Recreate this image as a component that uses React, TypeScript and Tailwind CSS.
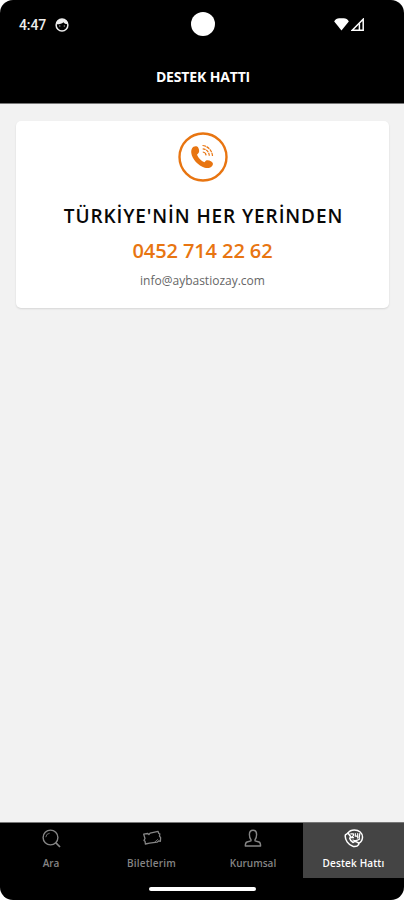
import { type ReactNode } from 'react';

type Tab = {
    label: string;
    icon: ReactNode;
    active?: boolean;
    labelClass: string;
};

function SearchIcon() {
    return (
        <svg className="h-5 w-5" viewBox="0 0 20 20" fill="none" stroke="currentColor" strokeWidth="1.4">
            <circle cx="9.5" cy="8.5" r="7.4" />
            <path d="M14.7 13.7 19 18" strokeWidth="1.7" />
            <path d="M4.8 8.2a4.4 4.4 0 0 1 3.9-4" strokeWidth="0.8" />
        </svg>
    );
}

function TicketIcon() {
    return (
        <svg className="h-5 w-5" viewBox="0 0 20 20" fill="none" stroke="currentColor" strokeWidth="1.3" strokeLinejoin="round">
            <path d="M1.7 5.2 5.8 4.5l1.1 1.1 1.2-1.4 8-1.8.7 2.1 1 .4-.3 2.2 1.1 1.6-.2 3.6-1.8-.4-1.6 1.3-7.4.9-4.2.9-.4-2.8-1-.8 1-1.9Z" />
            <path d="m12.5 13.3 3.6-3.2" strokeWidth="0.8" />
        </svg>
    );
}

function PersonIcon() {
    return (
        <svg className="h-5 w-5" viewBox="0 0 20 20" fill="none" stroke="currentColor" strokeWidth="1.4" strokeLinejoin="round">
            <path d="M8 10.7C6.6 9.2 6.4 7.9 6.4 5.5 6.4 3 7.6 1.2 10 1.2s3.6 1.8 3.6 4.3c0 2.4-.2 3.7-1.6 5.2v1.1l4 1.2c1.2.5 1.6 1.6 1.6 4H2.3c0-2.4.5-3.5 1.7-4l4-1.2Z" />
        </svg>
    );
}

function SupportIcon() {
    return (
        <svg className="h-5 w-5" viewBox="0 0 20 20" fill="none" stroke="currentColor" strokeWidth="1.5" strokeLinecap="round" strokeLinejoin="round">
            <path d="M4 4C5.3 2 7.5 1 10.3 1c4.8 0 8.2 3 8.2 7.1 0 2.6-1.2 4.8-3.4 6.1" />
            <path d="M4 4 1.4 5.8c-1 4.4 3 10.4 7.9 11.6 2.3.5 4.3-.3 5.4-1.8l-.4-2-3.4-1.4-1.8 1.3c-1.8-.8-2.9-2.3-3.4-4.2l1-1.6Z" />
            <path d="M6.8 4.9h2.6v1.7L7.1 8.7h2.4M11.3 4.7v2.5h2.4m0-2.7v4.6M15.8 4.6l-.6 4.6M8.9 11c2.2.9 5 .4 6.8-.9" strokeWidth="1.2" />
        </svg>
    );
}

const tabs: Tab[] = [
    { label: 'Ara', icon: <SearchIcon />, labelClass: 'pl-px' },
    { label: 'Biletlerim', icon: <TicketIcon />, labelClass: 'tracking-[0.2px]' },
    { label: 'Kurumsal', icon: <PersonIcon />, labelClass: 'pl-px' },
    { label: 'Destek Hattı', icon: <SupportIcon />, active: true, labelClass: 'tracking-[0.15px]' },
];

function StatusBar() {
    return (
        <div className="grid h-[49px] grid-cols-3 items-center px-[19px]">
            <div className="flex items-center gap-[9px] text-[#ededed]">
                <span className="font-[Roboto,sans-serif] text-[14px] leading-none font-medium tracking-[-0.1px]">4:47</span>
                <svg className="h-[14px] w-[14px]" viewBox="0 0 14 14" fill="none" stroke="currentColor">
                    <circle cx="7" cy="7" r="5.9" strokeWidth="1.5" />
                    <path d="M1.3 6.3C1.7 2.8 4 1 7 1s5.3 1.8 5.7 5.3C10.5 6.1 9.3 5.4 8.4 4.2 6.8 5.8 4.5 6.4 1.3 6.3Z" fill="currentColor" stroke="none" />
                    <path d="M4.3 8h1M8.8 8h1" strokeWidth="1" />
                </svg>
            </div>
            <div className="-mt-px ml-[2px] h-6 w-6 justify-self-center rounded-full bg-white" />
            <div className="mr-[21px] flex items-center gap-[2px] justify-self-end text-white">
                <svg className="h-[13px] w-[15px]" viewBox="0 0 15 13" fill="currentColor">
                    <path d="M.2 3.4C1.2 1.4 3.2.2 5.2.2h4.6c2 0 4 1.2 5 3.2L7.5 12.6Z" />
                </svg>
                <svg className="h-[13px] w-[13px]" viewBox="0 0 13 13" fill="none" stroke="currentColor" strokeWidth="1.5">
                    <path d="M1.2 12.2 12.2 1.2v11Z" />
                    <path d="M8.4 5.5v6.7" />
                </svg>
            </div>
        </div>
    );
}

export default function App() {
    return (
        <div className="h-[900px] w-[404px] bg-white font-['Open_Sans','Noto_Sans',sans-serif]">
            <div className="flex h-full flex-col overflow-hidden rounded-[13px] bg-black">
                <header className="h-[104px] shrink-0 border-b border-[#777]">
                    <StatusBar />
                    <h1 className="pt-[20px] pl-[2px] text-center text-[14px] leading-4 font-bold tracking-[-0.15px] text-white">DESTEK HATTI</h1>
                </header>

                <main className="flex-1 bg-[#f2f2f2] px-4 pt-[17px]">
                    <div className="flex h-[187px] w-[373px] flex-col items-center rounded-[5px] bg-white pt-[11px] shadow-[0_1px_2px_rgba(0,0,0,0.12)]">
                        <svg className="h-[50px] w-[50px] text-[#e87511]" viewBox="0 0 50 50" fill="none" stroke="currentColor">
                            <circle cx="25" cy="25" r="23.5" strokeWidth="2.4" />
                            <path
                                d="M14 16.5c1.2-2.5 4.9-3.1 6.3-.8 1 1.7 1.2 4.2.2 5.4l-1.5 1.6c1.6 3.5 4 6 7.4 7.6l1.4-1.6c1.2-.8 3.5-.5 5.5.7 1.9 1.1 2.1 2.7 1 4.3-1.4 2.1-4.2 2.9-7.6 2-6.3-1.8-12.8-8.7-13.4-14.7-.2-1.8 0-3.3.7-4.5Z"
                                fill="currentColor"
                                stroke="none"
                            />
                            <path d="M24.5 13.5c5.2.3 9.6 4.8 10 10.5" strokeWidth="1.2" strokeDasharray="3.5 .7" />
                            <path d="M24.7 16.8c3.8.3 6.4 3.1 6.6 7" strokeWidth="1.2" strokeDasharray="3 .7" />
                            <path d="M24.8 20c1.9.2 3.1 1.5 3.3 3.4" strokeWidth="1.2" />
                        </svg>
                        <h2 className="mt-[21px] pl-[2px] text-[19px] leading-[26px] font-semibold tracking-[0.9px] whitespace-nowrap text-[#080808]">
                            TÜRKİYE'NİN HER YERİNDEN
                        </h2>
                        <p className="mt-[9px] text-[20px] leading-[26px] font-semibold tracking-[-0.1px] whitespace-nowrap text-[#e87511]">0452 714 22 62</p>
                        <p className="mt-[9px] text-[12px] leading-4 whitespace-nowrap text-[#666]">info@aybastiozay.com</p>
                    </div>
                </main>

                <nav className="grid h-[56px] shrink-0 grid-cols-4 border-t border-[#777]">
                    {tabs.map((tab) => (
                        <div
                            key={tab.label}
                            className={
                                tab.active
                                    ? 'flex flex-col items-center bg-[#444] pt-[6px] text-white'
                                    : 'flex flex-col items-center pt-[6px] text-[#858585]'
                            }
                        >
                            {tab.icon}
                            <span className={`mt-[7px] text-[10px] leading-[14px] font-semibold whitespace-nowrap ${tab.labelClass}`}>{tab.label}</span>
                        </div>
                    ))}
                </nav>
                <div className="flex h-[22px] shrink-0 justify-center pt-[9px]">
                    <div className="h-[4px] w-[107px] rounded-full bg-white" />
                </div>
            </div>
        </div>
    );
}
